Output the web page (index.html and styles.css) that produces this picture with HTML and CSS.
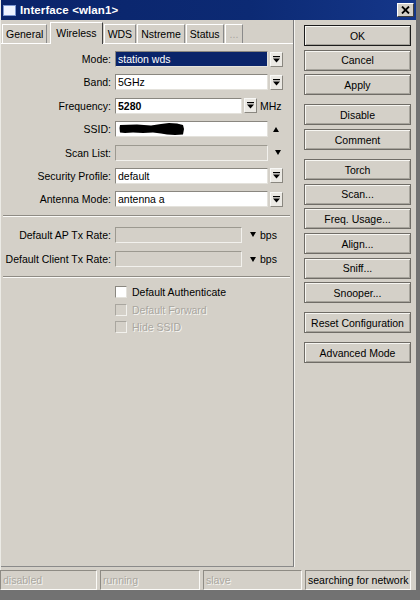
FILE: index.html
```html
<!DOCTYPE html>
<html>
<head>
<meta charset="utf-8">
<link rel="stylesheet" href="styles.css">
</head>
<body>
<div class="window">
  <div class="titlebar">
    <span class="ticon"></span>
    <span class="title">Interface &lt;wlan1&gt;</span>
    <span class="close"><svg width="9" height="8" viewBox="0 0 9 8"><path d="M1 0.5 L8 7.5 M8 0.5 L1 7.5" stroke="#000" stroke-width="1.8"/></svg></span>
  </div>
  <div class="main">
    <div class="left">
      <div class="tabs">
        <div class="tab">General</div>
        <div class="tab active">Wireless</div>
        <div class="tab">WDS</div>
        <div class="tab">Nstreme</div>
        <div class="tab">Status</div>
        <div class="tab dim">...</div>
      </div>
      <div class="form">
        <div class="row">
          <span class="label">Mode:</span>
          <span class="field wide selected">station wds</span>
          <span class="combo"><svg width="7" height="7" viewBox="0 0 7 7"><path d="M0 0.5 H7" stroke="#000" stroke-width="1.4"/><path d="M0 2.5 H7 L3.5 6.5 Z" fill="#000"/></svg></span>
        </div>
        <div class="row">
          <span class="label">Band:</span>
          <span class="field wide">5GHz</span>
          <span class="combo"><svg width="7" height="7" viewBox="0 0 7 7"><path d="M0 0.5 H7" stroke="#000" stroke-width="1.4"/><path d="M0 2.5 H7 L3.5 6.5 Z" fill="#000"/></svg></span>
        </div>
        <div class="row">
          <span class="label">Frequency:</span>
          <span class="field mid bold">5280</span>
          <span class="combo"><svg width="7" height="7" viewBox="0 0 7 7"><path d="M0 0.5 H7" stroke="#000" stroke-width="1.4"/><path d="M0 2.5 H7 L3.5 6.5 Z" fill="#000"/></svg></span>
          <span class="unit">MHz</span>
        </div>
        <div class="row">
          <span class="label">SSID:</span>
          <span class="field wide"><svg class="blot" width="66" height="14" viewBox="0 0 66 14"><path d="M1 3 L18 2.5 L32 3.5 L42 2 L50 1 L58 1.5 L64 3 L65 7 L64 12.5 L56 13 L48 12.5 L42 11.5 L34 10.5 L24 11 L14 10.5 L6 11 L1 10.5 L0.5 6 Z" fill="#000"/></svg></span>
          <span class="tri up"></span>
        </div>
        <div class="row">
          <span class="label">Scan List:</span>
          <span class="field wide off"></span>
          <span class="tri down scan"></span>
        </div>
        <div class="row">
          <span class="label">Security Profile:</span>
          <span class="field wide">default</span>
          <span class="combo"><svg width="7" height="7" viewBox="0 0 7 7"><path d="M0 0.5 H7" stroke="#000" stroke-width="1.4"/><path d="M0 2.5 H7 L3.5 6.5 Z" fill="#000"/></svg></span>
        </div>
        <div class="row">
          <span class="label">Antenna Mode:</span>
          <span class="field wide">antenna a</span>
          <span class="combo"><svg width="7" height="7" viewBox="0 0 7 7"><path d="M0 0.5 H7" stroke="#000" stroke-width="1.4"/><path d="M0 2.5 H7 L3.5 6.5 Z" fill="#000"/></svg></span>
        </div>
        <div class="sep sep-a"></div>
        <div class="row rate">
          <span class="label">Default AP Tx Rate:</span>
          <span class="field mid off"></span>
          <span class="tri down rt"></span>
          <span class="unit">bps</span>
        </div>
        <div class="row rate">
          <span class="label">Default Client Tx Rate:</span>
          <span class="field mid off"></span>
          <span class="tri down rt"></span>
          <span class="unit">bps</span>
        </div>
        <div class="sep sep-b"></div>
        <div class="check"><span class="box"></span><span>Default Authenticate</span></div>
        <div class="check disabled"><span class="box"></span><span>Default Forward</span></div>
        <div class="check disabled"><span class="box"></span><span>Hide SSID</span></div>
      </div>
    </div>
    <div class="right">
      <div class="btn default">OK</div>
      <div class="btn">Cancel</div>
      <div class="btn">Apply</div>
      <div class="btn group">Disable</div>
      <div class="btn">Comment</div>
      <div class="btn group">Torch</div>
      <div class="btn">Scan...</div>
      <div class="btn">Freq. Usage...</div>
      <div class="btn">Align...</div>
      <div class="btn">Sniff...</div>
      <div class="btn">Snooper...</div>
      <div class="btn group">Reset Configuration</div>
      <div class="btn group">Advanced Mode</div>
    </div>
  </div>
  <div class="status">
    <div class="cell c1 grey">disabled</div>
    <div class="cell c2 grey">running</div>
    <div class="cell c3 grey">slave</div>
    <div class="cell c4">searching for network</div>
  </div>
</div>
</body>
</html>
```

FILE: styles.css
```css
* { box-sizing: border-box; }

html, body {
  margin: 0;
  width: 420px;
  height: 600px;
  overflow: hidden;
}

body {
  background: #727272;
  font-family: "Liberation Sans", Arial, sans-serif;
  font-size: 10.5px;
  color: #000;
}

.window {
  width: 416px;
  height: 590px;
  background: #d4d0c8;
  display: flex;
  flex-direction: column;
  border-left: 1px solid #ecebe6;
}

/* title bar */
.titlebar {
  height: 20px;
  flex: none;
  background: linear-gradient(90deg, #0a246a 0%, #0c2a74 60%, #15378a 100%);
  display: flex;
  align-items: center;
  padding: 0 2px 0 2px;
  gap: 4px;
  color: #fff;
}

.ticon {
  width: 13px;
  height: 11px;
  background: #eef3ff;
  border: 1px solid #7d97d0;
}

.title {
  flex: 1;
  font-weight: bold;
  font-size: 11.5px;
  letter-spacing: 0.1px;
}

.close {
  width: 17px;
  height: 14px;
  background: #d4d0c8;
  border: 1px solid;
  border-color: #fff #404040 #404040 #fff;
  display: flex;
  align-items: center;
  justify-content: center;
}

/* main */
.main {
  height: 547px;
  flex: none;
  display: flex;
}

.left {
  width: 293px;
  border-right: 1px solid #7c7c7c;
  border-bottom: 1px solid #8a8a8a;
  display: flex;
  flex-direction: column;
}

.tabs {
  height: 24px;
  display: flex;
  align-items: flex-end;
  padding-left: 1px;
  gap: 1px;
  border-bottom: 1px solid #fff;
}

.tab {
  height: 19px;
  padding: 0 3px;
  display: flex;
  align-items: center;
  border-top: 1px solid #fff;
  border-left: 1px solid #fff;
  border-right: 1px solid #8a8a8a;
  background: #d4d0c8;
}

.tab.active {
  height: 22px;
  padding: 0 5px 2px;
  margin: 0 0 -1px 2px;
  border-right-color: #404040;
}

.tab.dim {
  color: #a8a59e;
  padding: 0 4px;
}

.form {
  padding-top: 7px;
}

.row {
  display: flex;
  align-items: center;
  height: 16px;
  margin-bottom: 7.4px;
}

.label {
  width: 110px;
  text-align: right;
  margin-right: 4px;
  white-space: nowrap;
}

.field {
  height: 16px;
  background: #fff;
  border: 1px solid;
  border-color: #8a8780 #e4e2dc #e4e2dc #8a8780;
  display: flex;
  align-items: center;
  padding-left: 2px;
  white-space: nowrap;
  overflow: hidden;
}

.field.wide { width: 153px; }
.field.mid { width: 127px; }

.field.selected {
  background: #0a246a;
  color: #fff;
}

.field.bold { font-weight: bold; }

.field.off {
  background: #d4d0c8;
  border-color: #9c9990 #f2f1ed #f2f1ed #9c9990;
}

.blot { margin-left: 1px; }

.combo {
  width: 13px;
  height: 15px;
  margin-left: 2px;
  background: #ebe9e4;
  border: 1px solid;
  border-color: #f8f8f6 #8a8780 #8a8780 #f8f8f6;
  display: flex;
  align-items: center;
  justify-content: center;
}

.unit { margin-left: 3px; }

.tri {
  width: 0;
  height: 0;
  border-left: 3.5px solid transparent;
  border-right: 3.5px solid transparent;
}

.tri.up {
  border-bottom: 5px solid #000;
  margin-left: 5px;
}

.tri.down {
  border-top: 5px solid #000;
}

.tri.scan { margin-left: 7px; }
.tri.rt { margin-left: 8px; margin-right: 1px; }

.sep {
  height: 2px;
  border-top: 1px solid #8e8b84;
  border-bottom: 1px solid #fbfaf7;
  margin-left: 2px;
  margin-right: 3px;
}

.sep-a { margin-top: 1px; margin-bottom: 10px; }
.row.rate { margin-bottom: 8.6px; }
.sep-b { margin-top: 1px; margin-bottom: 5.5px; }

.check {
  height: 17.5px;
  display: flex;
  align-items: center;
  padding-left: 114px;
  gap: 5px;
}

.box {
  width: 12px;
  height: 12px;
  background: #fff;
  border: 1px solid;
  border-color: #8a8780 #e4e2dc #e4e2dc #8a8780;
}

.check.disabled { color: #a9a69f; text-shadow: 1px 1px 0 #f6f5f2; }
.check.disabled .box {
  background: #d4d0c8;
  border-color: #a9a69f #f2f1ed #f2f1ed #a9a69f;
}

/* right column */
.right {
  flex: 1;
  padding: 5px 0 0 9px;
  display: flex;
  flex-direction: column;
  border-left: 1px solid #f4f3ef;
}

.btn {
  width: 107px;
  height: 21px;
  margin-bottom: 3.7px;
  display: flex;
  align-items: center;
  justify-content: center;
  border: 1px solid #6f6c66;
  box-shadow: inset 1px 1px 0 #f7f6f2, inset -1px -1px 0 #a7a49c;
  white-space: nowrap;
}

.btn.default { border-color: #1c1c1c; }
.btn.group { margin-top: 5.3px; }

/* status bar */
.status {
  height: 23px;
  flex: none;
  display: flex;
  padding-top: 3px;
  gap: 3px;
}

.cell {
  height: 20px;
  border: 1px solid;
  border-color: #8e8b84 #fbfaf7 #fbfaf7 #8e8b84;
  display: flex;
  align-items: center;
  padding-left: 2px;
  white-space: nowrap;
}

.cell.grey { color: #aaa79f; text-shadow: 1px 1px 0 #f6f5f2; }
.c1 { width: 97px; margin-left: -1px; }
.c2 { width: 100px; }
.c3 { width: 99px; }
.c4 { width: 106px; }
```
